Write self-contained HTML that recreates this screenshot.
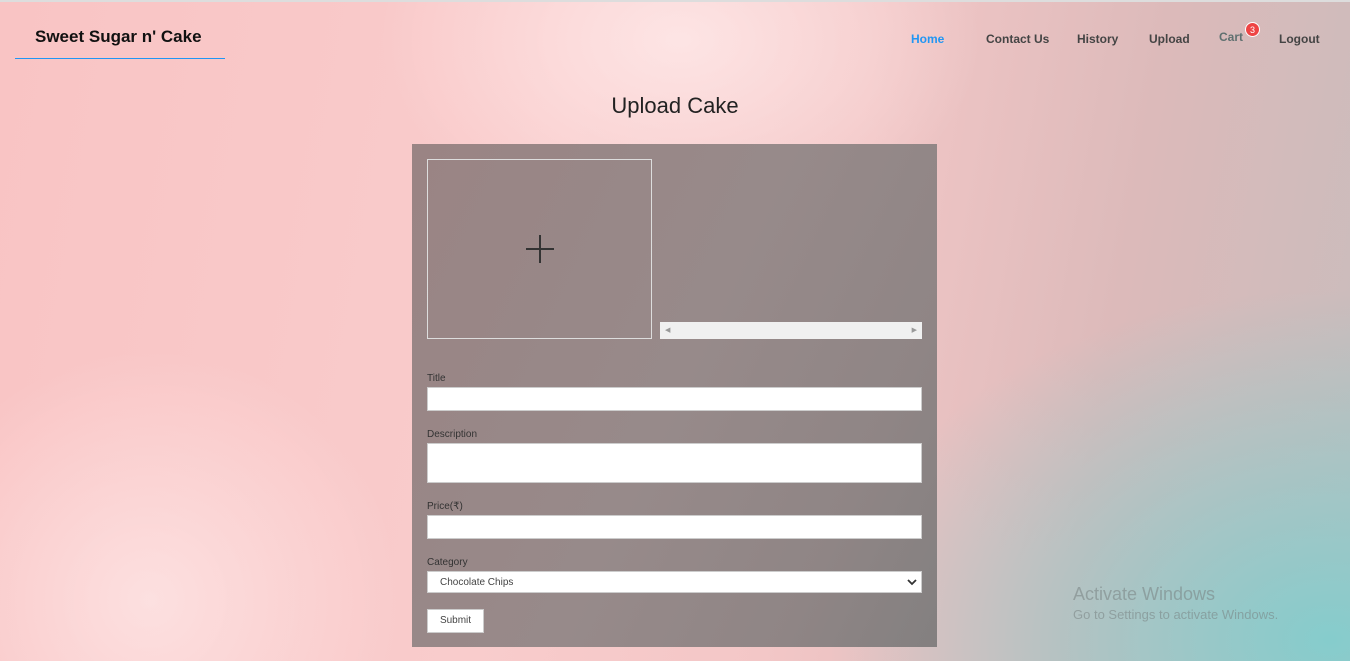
<!DOCTYPE html>
<html><head><meta charset="utf-8"><style>
*{box-sizing:border-box;margin:0;padding:0}
body{width:1350px;height:661px;overflow:hidden;font-family:"Liberation Sans",sans-serif;position:relative;
background:
radial-gradient(ellipse 500px 350px at 1330px 640px,rgba(130,205,205,0.95),rgba(160,200,200,0) 100%),
radial-gradient(ellipse 300px 200px at 680px 40px,rgba(255,235,235,0.8),rgba(255,235,235,0) 100%),
radial-gradient(ellipse 250px 250px at 150px 600px,rgba(255,240,240,0.6),rgba(255,240,240,0) 100%),
linear-gradient(100deg,#f9c4c4 0%,#f9cccc 40%,#f3c7c7 60%,#dcbaba 80%,#c8bcbc 100%);}
.top{position:absolute;left:0;top:0;width:1350px;height:2px;background:#ddd}
.brand{position:absolute;left:35px;top:27px;font-size:17px;font-weight:bold;color:#111}
.uline{position:absolute;left:15px;top:58px;width:210px;height:1px;background:#2196f3}
.nav a{position:absolute;top:32px;font-size:12px;font-weight:bold;color:#444;text-decoration:none}
.badge{position:absolute;left:1245px;top:22px;width:15px;height:15px;border-radius:50%;background:#ee4444;color:#fff;font-size:9px;text-align:center;line-height:14px;border:1px solid #fff}
h1{position:absolute;top:93px;left:0;width:1350px;text-align:center;font-weight:normal;font-size:22px;color:#222}
.panel{position:absolute;left:412px;top:144px;width:525px;height:503px;background:linear-gradient(115deg,#9a8484 0%,#978a8a 50%,#8f8585 80%,#838080 100%)}
.img{position:absolute;left:15px;top:15px;width:225px;height:180px;border:1px solid #ddd}
.scroll{position:absolute;left:248px;top:178px;width:262px;height:17px;background:#f0f0f0;font-size:7px;color:#999;line-height:17px}
label{position:absolute;left:15px;font-size:10px;color:#333}
.inp{position:absolute;left:15px;width:495px;background:#fff;border:1px solid #ccc}
.btn{position:absolute;left:15px;top:465px;width:57px;height:24px;background:#fff;border:1px solid #ccc;font-size:10px;color:#444;text-align:center;line-height:22px}
.win{position:absolute;left:1073px;top:584px;color:rgba(120,130,130,0.55)}
</style></head><body>
<div class="top"></div>
<div class="brand">Sweet Sugar n' Cake</div>
<div class="uline"></div>
<div class="nav">
<a style="left:911px;color:#2196f3">Home</a>
<a style="left:986px">Contact Us</a>
<a style="left:1077px">History</a>
<a style="left:1149px">Upload</a>
<a style="left:1219px;top:30px;color:#607070">Cart</a>
<a style="left:1279px">Logout</a>
</div>
<div class="badge">3</div>
<h1>Upload Cake</h1>
<div class="panel">
<div class="img"><svg width="225" height="180" style="position:absolute;left:-1px;top:-1px"><path d="M113 76V104M99 90H127" stroke="#333" stroke-width="2"/></svg></div>
<div class="scroll"><span style="position:absolute;left:5px">◀</span><span style="position:absolute;right:5px">▶</span></div>
<label style="top:229px">Title</label>
<div class="inp" style="top:243px;height:24px"></div>
<label style="top:285px">Description</label>
<div class="inp" style="top:299px;height:40px"></div>
<label style="top:357px">Price(₹)</label>
<div class="inp" style="top:371px;height:24px"></div>
<label style="top:413px">Category</label>
<div class="inp" style="top:427px;height:22px;font-size:10px;color:#444;padding:5px 12px">Chocolate Chips<svg style="position:absolute;right:4px;top:6px" width="10" height="8"><path d="M1 2L5 6L9 2" stroke="#333" stroke-width="1.8" fill="none"/></svg></div>
<div class="btn">Submit</div>
</div>
<div class="win"><div style="font-size:18px">Activate Windows</div><div style="font-size:13px;margin-top:2px">Go to Settings to activate Windows.</div></div>
</body></html>
